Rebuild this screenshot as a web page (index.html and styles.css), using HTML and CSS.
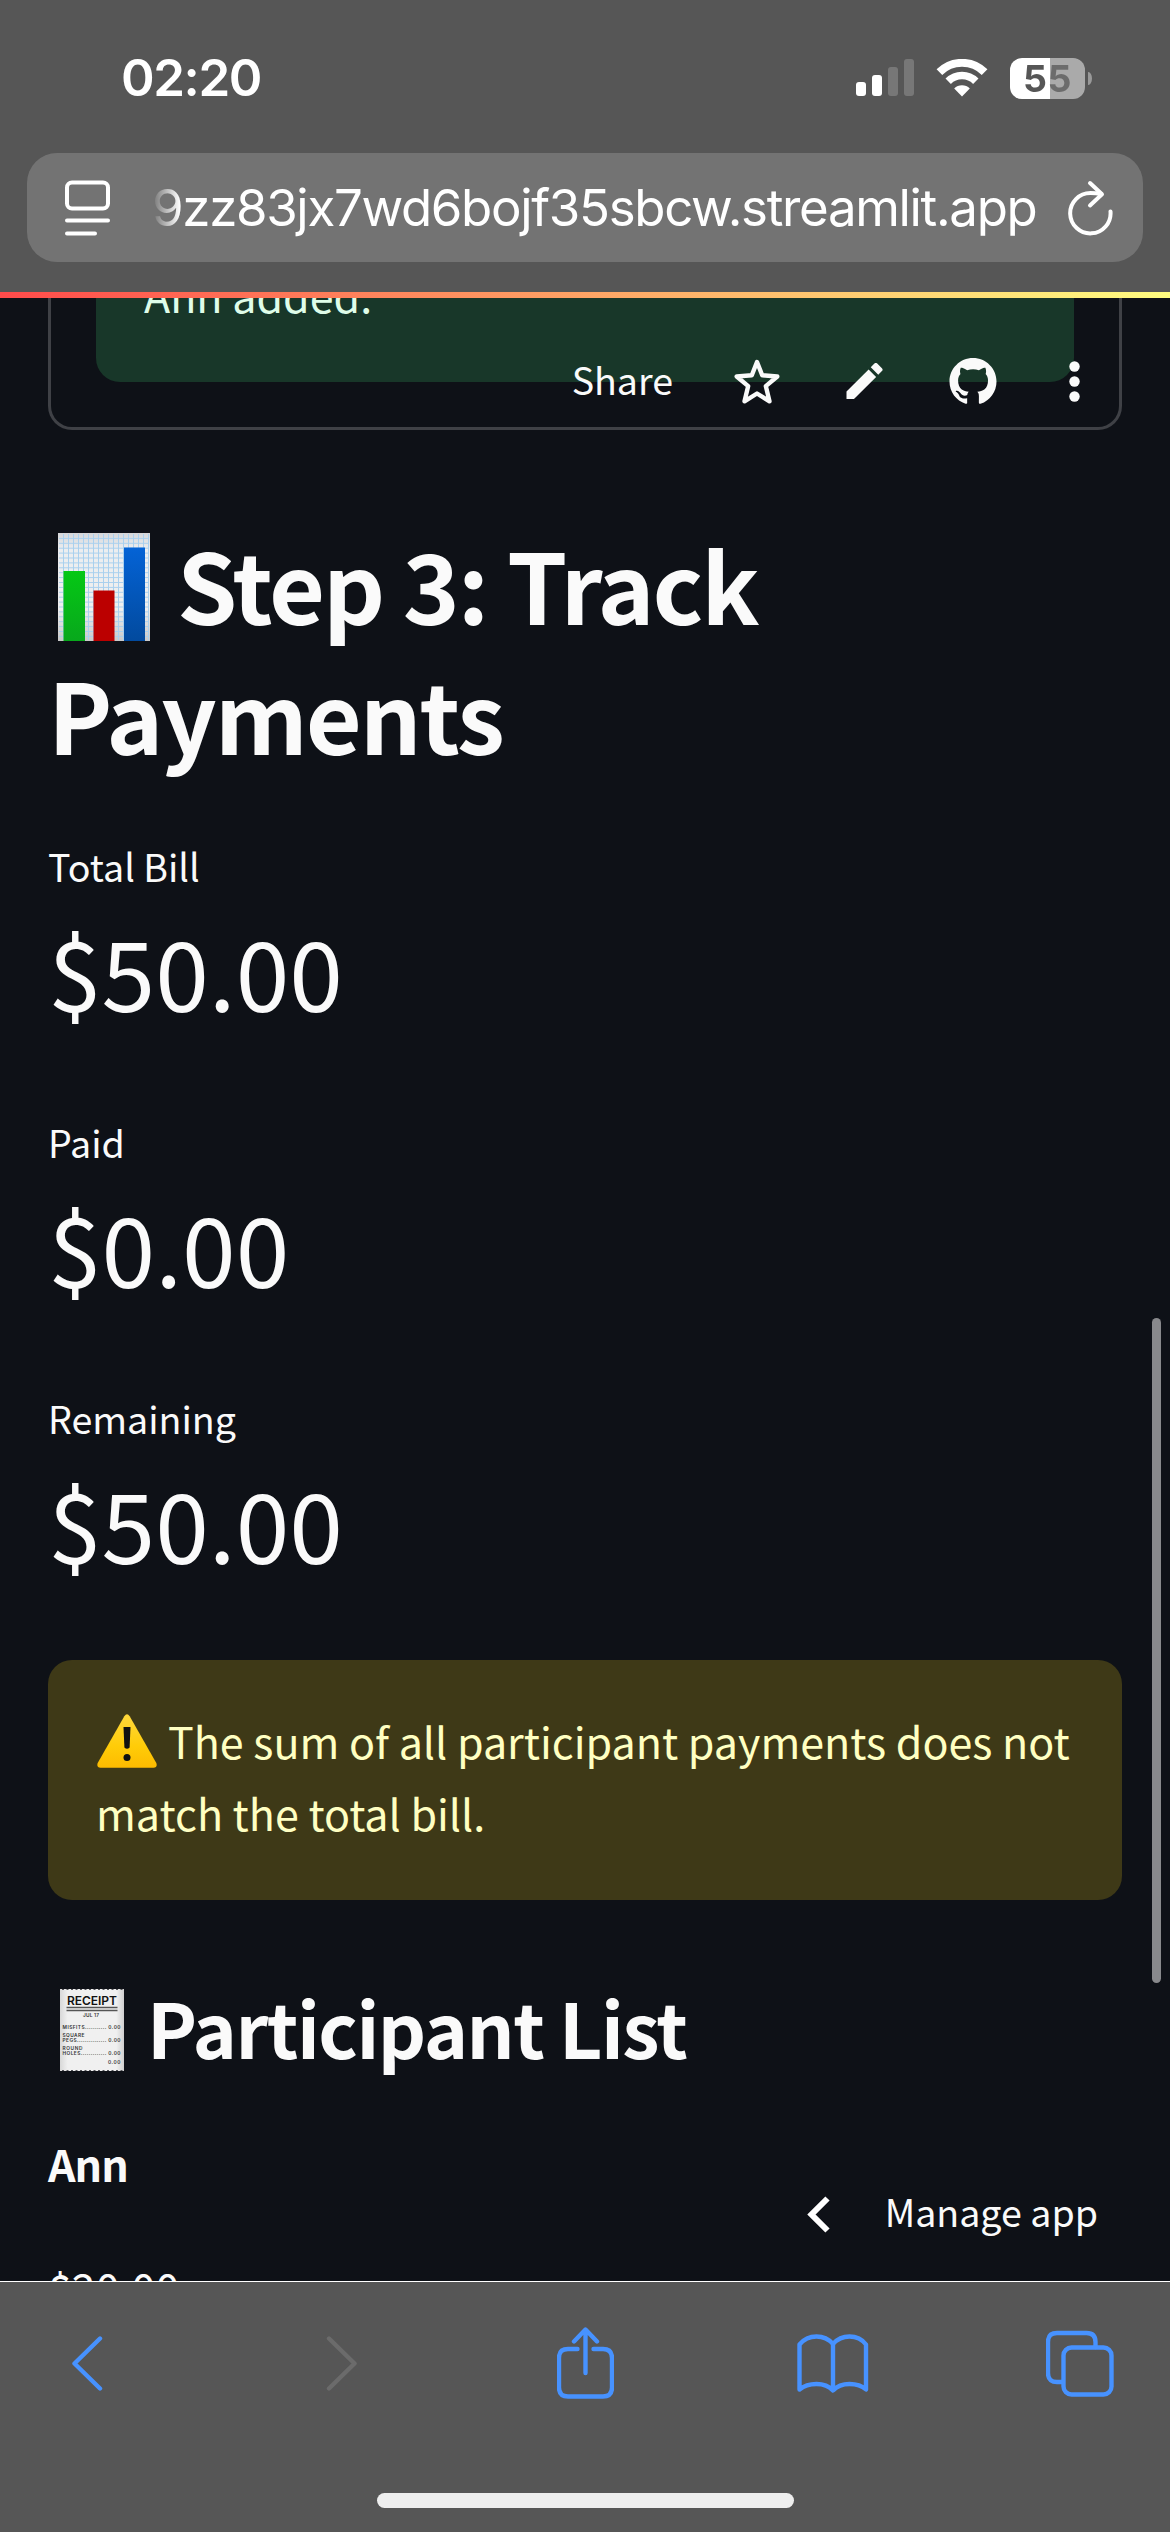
FILE: index.html
```html
<!DOCTYPE html>
<html lang="en">
<head>
<meta charset="utf-8">
<title>Track Payments</title>
<link rel="stylesheet" href="styles.css">
</head>
<body>
<div class="screen">
  <header class="browser-top">
    <div class="status-bar">
      <span class="clock">02:20</span>
      <div class="status-icons">
        <svg class="signal" width="59" height="38" viewBox="0 0 59 38" fill="#fff">
          <rect x="0" y="23" width="10" height="14" rx="3"/>
          <rect x="16" y="16" width="10" height="21" rx="3"/>
          <rect x="32" y="8" width="10" height="29" rx="3" opacity=".2"/>
          <rect x="48" y="0" width="10" height="37" rx="3" opacity=".2"/>
        </svg>
        <svg class="wifi" width="52" height="38" viewBox="0 0 52 38" fill="none" stroke="#fff">
          <path d="M3.4 13.2a32 32 0 0 1 45.2 0" stroke-width="8"/>
          <path d="M12.2 22.2a19.5 19.5 0 0 1 27.6 0" stroke-width="7.6"/>
          <path d="M26 37.500l-7.800-8a11 11 0 0 1 15.600 0z" fill="#fff" stroke="none"/>
        </svg>
        <div class="battery"><span>55</span></div>
        <i class="battery-tip"></i>
      </div>
    </div>
    <div class="address-bar">
      <svg class="page-icon" width="46" height="56" viewBox="0 0 46 56" fill="none" stroke="#fff" stroke-width="4" stroke-linecap="round">
        <rect x="2" y="2.500" width="41" height="26" rx="5"/>
        <path d="M2 40.500h41M2 53.500h28"/>
      </svg>
      <span class="url">9zz83jx7wd6bojf35sbcw.streamlit.app</span>
      <svg class="reload" width="46" height="56" viewBox="0 0 46 56" fill="none" stroke="#fff" stroke-width="4" stroke-linecap="round" stroke-linejoin="round">
        <path d="M42.500 31.500A20.200 20.200 0 1 1 22.500 13Q28 13 33 14"/>
        <path d="M22 3l12 11.300L22 25.500"/>
      </svg>
    </div>
  </header>

  <main class="page">
    <div class="progress"></div>
    <section class="form-box">
      <div class="success"><p>Ann added.</p></div>
    </section>

    <h2>
      <svg class="chart-emoji" width="92" height="108" viewBox="0 0 92 108">
        <defs>
          <linearGradient id="paper" x1="0" y1="0" x2="0" y2="1"><stop offset="0" stop-color="#d5d6da"/><stop offset=".15" stop-color="#eceef0"/><stop offset=".7" stop-color="#efefef"/><stop offset="1" stop-color="#c9c9c9"/></linearGradient>
          <linearGradient id="green" x1="0" y1="0" x2="0" y2="1"><stop offset="0" stop-color="#05c815"/><stop offset="1" stop-color="#08a81c"/></linearGradient>
          <linearGradient id="blue" x1="0" y1="0" x2="0" y2="1"><stop offset="0" stop-color="#0463d6"/><stop offset="1" stop-color="#024a9e"/></linearGradient>
          <pattern id="grid" width="5" height="4.900" patternUnits="userSpaceOnUse"><path d="M0 .5h5M.5 0v5" stroke="#a9d0ee" stroke-width="1" fill="none"/></pattern>
        </defs>
        <rect width="92" height="108" fill="url(#paper)"/>
        <rect x="1" y="1" width="90" height="106" fill="url(#grid)"/>
        <rect x="5.500" y="38" width="21.500" height="70" fill="url(#green)"/>
        <rect x="35.500" y="57.500" width="21" height="50.500" fill="#bb0000"/>
        <rect x="66" y="14.500" width="21" height="93.500" fill="url(#blue)"/>
      </svg>Step 3: Track Payments</h2>

    <dl class="metrics">
      <div class="metric"><dt>Total Bill</dt><dd>$50.00</dd></div>
      <div class="metric"><dt>Paid</dt><dd>$0.00</dd></div>
      <div class="metric"><dt>Remaining</dt><dd>$50.00</dd></div>
    </dl>

    <div class="warning"><p><svg class="warn-emoji" width="60" height="54" viewBox="0 0 60 54">
        <defs><linearGradient id="amber" x1="0" y1="0" x2="0" y2="1"><stop offset="0" stop-color="#ffd83c"/><stop offset=".6" stop-color="#ffcc08"/><stop offset="1" stop-color="#fdbb00"/></linearGradient></defs>
        <path d="M27.300 2.200q2.700-4 5.400 0L59.300 49q1.500 4.500-2.800 4.700H3.500Q-.8 53.500.7 49z" fill="url(#amber)"/>
        <path d="M26.500 13h7l-.9 20.500q-2.600 2.500-5.200 0z" fill="#111"/>
        <circle cx="30" cy="43.500" r="3.500" fill="#111"/>
      </svg>The sum of all participant payments does not match the total bill.</p></div>

    <h3>
      <svg class="receipt-emoji" width="64" height="82" viewBox="0 0 64 82">
        <defs><linearGradient id="slip"><stop offset="0" stop-color="#d8d8d8"/><stop offset=".12" stop-color="#f0f0f0"/><stop offset=".88" stop-color="#f0f0f0"/><stop offset="1" stop-color="#cfcfcf"/></linearGradient></defs>
        <rect width="64" height="82" fill="url(#slip)"/>
        <path d="M2 .5h62M2 81.500h62" stroke="#55565a" stroke-dasharray="2 2.500"/>
        <path d="M6.500 18.500h51M6.500 21.500h51" stroke="#555" stroke-width="1.400"/>
        <g class="slip-text">
          <text x="7" y="16" class="slip-title" textLength="50">RECEIPT</text>
          <text x="23" y="28" textLength="16">JUL 17</text>
          <text x="2.500" y="39.500" textLength="58">MISFITS........... 0.00</text>
          <text x="2.500" y="48" textLength="22">SQUARE</text>
          <text x="2.500" y="52.500" textLength="58">PEGS............... 0.00</text>
          <text x="2.500" y="61" textLength="20">ROUND</text>
          <text x="2.500" y="65.500" textLength="58">HOLES............. 0.00</text>
          <text x="48" y="75" textLength="12.500">0.00</text>
        </g>
      </svg>Participant List</h3>
    <p class="name">Ann</p>
    <p class="amount">$20.00</p>

    <nav class="app-toolbar">
      <span class="share">Share</span>
      <svg class="star" width="46" height="46" viewBox="0 0 46 46" fill="none" stroke="#fafafa" stroke-width="4.400" stroke-linejoin="round">
        <path d="M23 4l5.200 13.200 15.100 1.300-11.500 9.600 3.700 15.200L23 35.500l-12.500 7.800 3.700-15.200L2.700 18.500 17.800 17.200z"/>
      </svg>
      <svg class="pencil" width="37" height="36" viewBox="3 3 18 18" fill="#fafafa">
        <path d="M3 17.250V21h3.750L17.810 9.940l-3.750-3.750L3 17.250zM20.710 7.040a.996.996 0 0 0 0-1.410l-2.340-2.340a.996.996 0 0 0-1.410 0l-1.830 1.830 3.750 3.750 1.830-1.830z"/>
      </svg>
      <svg class="github" width="48" height="47" viewBox="0 0 16 16" fill="#fafafa">
        <path d="M8 0C3.580 0 0 3.580 0 8c0 3.540 2.290 6.530 5.470 7.590.4.070.55-.17.55-.38 0-.19-.01-.82-.01-1.490-2.010.37-2.530-.49-2.690-.94-.09-.23-.48-.94-.82-1.130-.28-.15-.68-.52-.01-.53.63-.01 1.080.58 1.230.82.72 1.210 1.870.87 2.330.66.07-.52.28-.87.51-1.070-1.780-.2-3.640-.89-3.640-3.950 0-.87.31-1.590.82-2.150-.08-.2-.36-1.020.08-2.120 0 0 .67-.21 2.200.82.64-.18 1.320-.27 2-.27s1.360.09 2 .27c1.530-1.040 2.200-.82 2.200-.82.44 1.100.16 1.920.08 2.120.51.560.82 1.270.82 2.150 0 3.070-1.870 3.750-3.650 3.950.29.25.54.73.54 1.480 0 1.070-.01 1.930-.01 2.200 0 .21.15.46.55.38A8.010 8.010 0 0 0 16 8c0-4.420-3.580-8-8-8z"/>
      </svg>
      <svg class="dots" width="11" height="41" viewBox="0 0 11 41" fill="#fafafa">
        <circle cx="5.500" cy="5.500" r="5.200"/><circle cx="5.500" cy="20.500" r="5.200"/><circle cx="5.500" cy="35.500" r="5.200"/>
      </svg>
    </nav>

    <div class="manage">
      <svg width="24" height="37" viewBox="0 0 24 37" fill="none" stroke="#fff" stroke-width="6"><path d="M20.500 2.500l-16 16 16 16"/></svg>
      <span>Manage app</span>
    </div>
    <div class="scroll-thumb"></div>
  </main>

  <footer class="browser-bottom">
    <div class="nav-icons">
      <svg class="back" width="32" height="72" viewBox="0 0 32 72"><path d="M29 11.500L3.500 36.500 29 61.500"/></svg>
      <svg class="forward" width="32" height="72" viewBox="0 0 32 72"><path d="M3 11.500l25.500 25L3 61.500"/></svg>
      <svg class="share-icon" width="57" height="72" viewBox="0 0 57 72"><path d="M20.500 22H11q-9 0-9 9v29.500q0 9 9 9h35q9 0 9-9V31q0-9-9-9h-9.500"/><path d="M28.500 46V3.500M17 14.500L28.500 2.500 40 14.500"/></svg>
      <svg class="book" width="72" height="72" viewBox="0 0 72 72"><path d="M36 17Q29.500 9.500 19.500 9.500 9 9.500 2.500 17.500V62.500Q9 57 19.500 57 30 57 36 63.500 42 57 52.500 57 63 57 69 62.500V17.500Q63 9.500 52.500 9.500 42.500 9.500 36 17V63"/></svg>
      <svg class="tabs" width="68" height="72" viewBox="0 0 68 72"><path d="M15.500 55H11q-9 0-9-9V15q0-9 9-9h29.500q9 0 9 9v5"/><rect x="17.500" y="20.500" width="48" height="47" rx="8"/></svg>
    </div>
    <div class="home-indicator"></div>
  </footer>
</div>
</body>
</html>
```
FILE: styles.css
```css
* { box-sizing: border-box; }
body { margin: 0; background: #0e1117; }
h2, h3, p, dl, dd { margin: 0; }
svg { flex: none; }

.screen {
  display: flex;
  flex-direction: column;
  width: 1170px;
  height: 2532px;
  overflow: hidden;
  color: #fafafa;
  font-family: "Noto Sans CJK SC", "Noto Sans", sans-serif;
}

/* Browser chrome, top */
.browser-top {
  flex: none;
  height: 292px;
  padding: 0 27px;
  background: #565656;
  color: #fff;
  font-family: Inter, "Liberation Sans", sans-serif;
}
.status-bar {
  display: flex;
  justify-content: space-between;
  height: 153px;
  padding: 48px 51px 0 94px;
}
.clock {
  font-size: 51px;
  font-weight: 600;
  line-height: 60px;
  letter-spacing: -1.400px;
}
.status-icons {
  display: flex;
  align-items: center;
  height: 60px;
}
.wifi { margin: 0 22px 0 21px; }
.battery {
  width: 75px;
  height: 41px;
  border-radius: 12px;
  background: linear-gradient(90deg, #fff 40.500px, #aaa 40.500px);
  font-size: 37.500px;
  font-weight: 700;
  line-height: 42px;
  letter-spacing: 0.500px;
  text-align: center;
}
.battery span {
  background: linear-gradient(90deg, #565656 26px, #6c6c6c 26px);
  background-clip: text;
  color: transparent;
}
.battery-tip {
  width: 4px;
  height: 13px;
  margin-left: 3px;
  border-radius: 0 4px 4px 0 / 0 7px 7px 0;
  background: #999;
}
.address-bar {
  display: flex;
  align-items: center;
  height: 109px;
  padding: 0 29px 0 38px;
  border-radius: 30px;
  background: #737373;
}
.url {
  flex: 1;
  margin-left: 41px;
  font-size: 51px;
  line-height: 80px;
  letter-spacing: -1.330px;
  white-space: nowrap;
  mask-image: linear-gradient(90deg, transparent, #000 28px);
}

/* App page */
.page {
  position: relative;
  flex: 1;
  min-height: 0;
  padding: 0 48px;
  overflow: hidden;
  background: #0e1117;
}
.progress {
  position: absolute;
  inset: 0 0 auto;
  z-index: 2;
  height: 6px;
  background: linear-gradient(90deg, #ff4b4b, #fffd80);
}
.form-box {
  height: 138px;
  padding: 0 45px;
  border: solid #3f4146;
  border-width: 0 3px 3px;
  border-radius: 0 0 24px 24px;
}
.success {
  height: 90px;
  padding: 0 48px;
  overflow: hidden;
  border-radius: 0 0 24px 24px;
  background: #183729;
  color: #dffde9;
}
.success p { margin-top: -34px; }
.success p, .warning p, .name, .amount {
  font-size: 43px;
  line-height: 72px;
}
h2 {
  margin-top: 89px;
  font-size: 96.600px;
  font-weight: 600;
  line-height: 129.600px;
  letter-spacing: -2.100px;
}
.chart-emoji { margin: 0 27px 0 10px; vertical-align: -16px; }
.metrics {
  display: flex;
  flex-direction: column;
  gap: 75px;
  margin-top: 56px;
}
dt { font-size: 37.600px; line-height: 63px; }
dd { margin-top: 8px; font-size: 96.600px; line-height: 130px; }
.warning {
  height: 240px;
  margin-top: 73px;
  padding: 44px 48px;
  border-radius: 24px;
  background: #3e3917;
  color: #ffffc2;
}
.warn-emoji { margin: 0 11px 0 1px; vertical-align: -9px; }
h3 {
  margin-top: 76px;
  font-size: 75.200px;
  font-weight: 600;
  line-height: 101px;
  letter-spacing: -1.500px;
}
.receipt-emoji { margin: 0 23px 0 12px; vertical-align: -12px; }
.slip-text {
  fill: #333;
  font: 600 4.800px Inter, sans-serif;
  letter-spacing: 0;
}
.slip-title { fill: #111; font-size: 12px; }
.name { margin-top: 50px; font-weight: 600; letter-spacing: -1px; }
.amount { margin-top: 52px; }

/* Floating over the page */
.app-toolbar {
  position: absolute;
  top: 60px;
  right: 90px;
  display: flex;
  align-items: center;
  height: 58px;
}
.share { margin-bottom: 5px; font-size: 37.600px; line-height: 58px; }
.star { margin-left: 61px; }
.pencil { margin-left: 66px; }
.github { margin-left: 66px; }
.dots { margin-left: 72px; }
.manage {
  position: absolute;
  right: 72px;
  bottom: 35px;
  display: flex;
  align-items: center;
  gap: 54px;
  font-size: 37.600px;
  line-height: 63px;
}
.manage span { margin: -4px 0 4px; }
.scroll-thumb {
  position: absolute;
  top: 1026px;
  right: 9px;
  width: 9px;
  height: 665px;
  border-radius: 5px;
  background: #88898c;
}

/* Browser chrome, bottom */
.browser-bottom {
  flex: none;
  height: 251px;
  border-top: 1px solid #fff;
  background: #565656;
}
.nav-icons {
  display: flex;
  padding: 45px 0 0 71px;
  fill: none;
  stroke: #4792ff;
  stroke-width: 4.400;
  stroke-linecap: round;
  stroke-linejoin: round;
}
.forward { margin-left: 223px; stroke: #6b6b6b; }
.share-icon { margin-left: 199px; }
.book { margin-left: 183px; }
.tabs { margin-left: 177px; }
.home-indicator {
  width: 417px;
  height: 15px;
  margin: 94px auto 0;
  border-radius: 8px;
  background: #eee;
}
```
